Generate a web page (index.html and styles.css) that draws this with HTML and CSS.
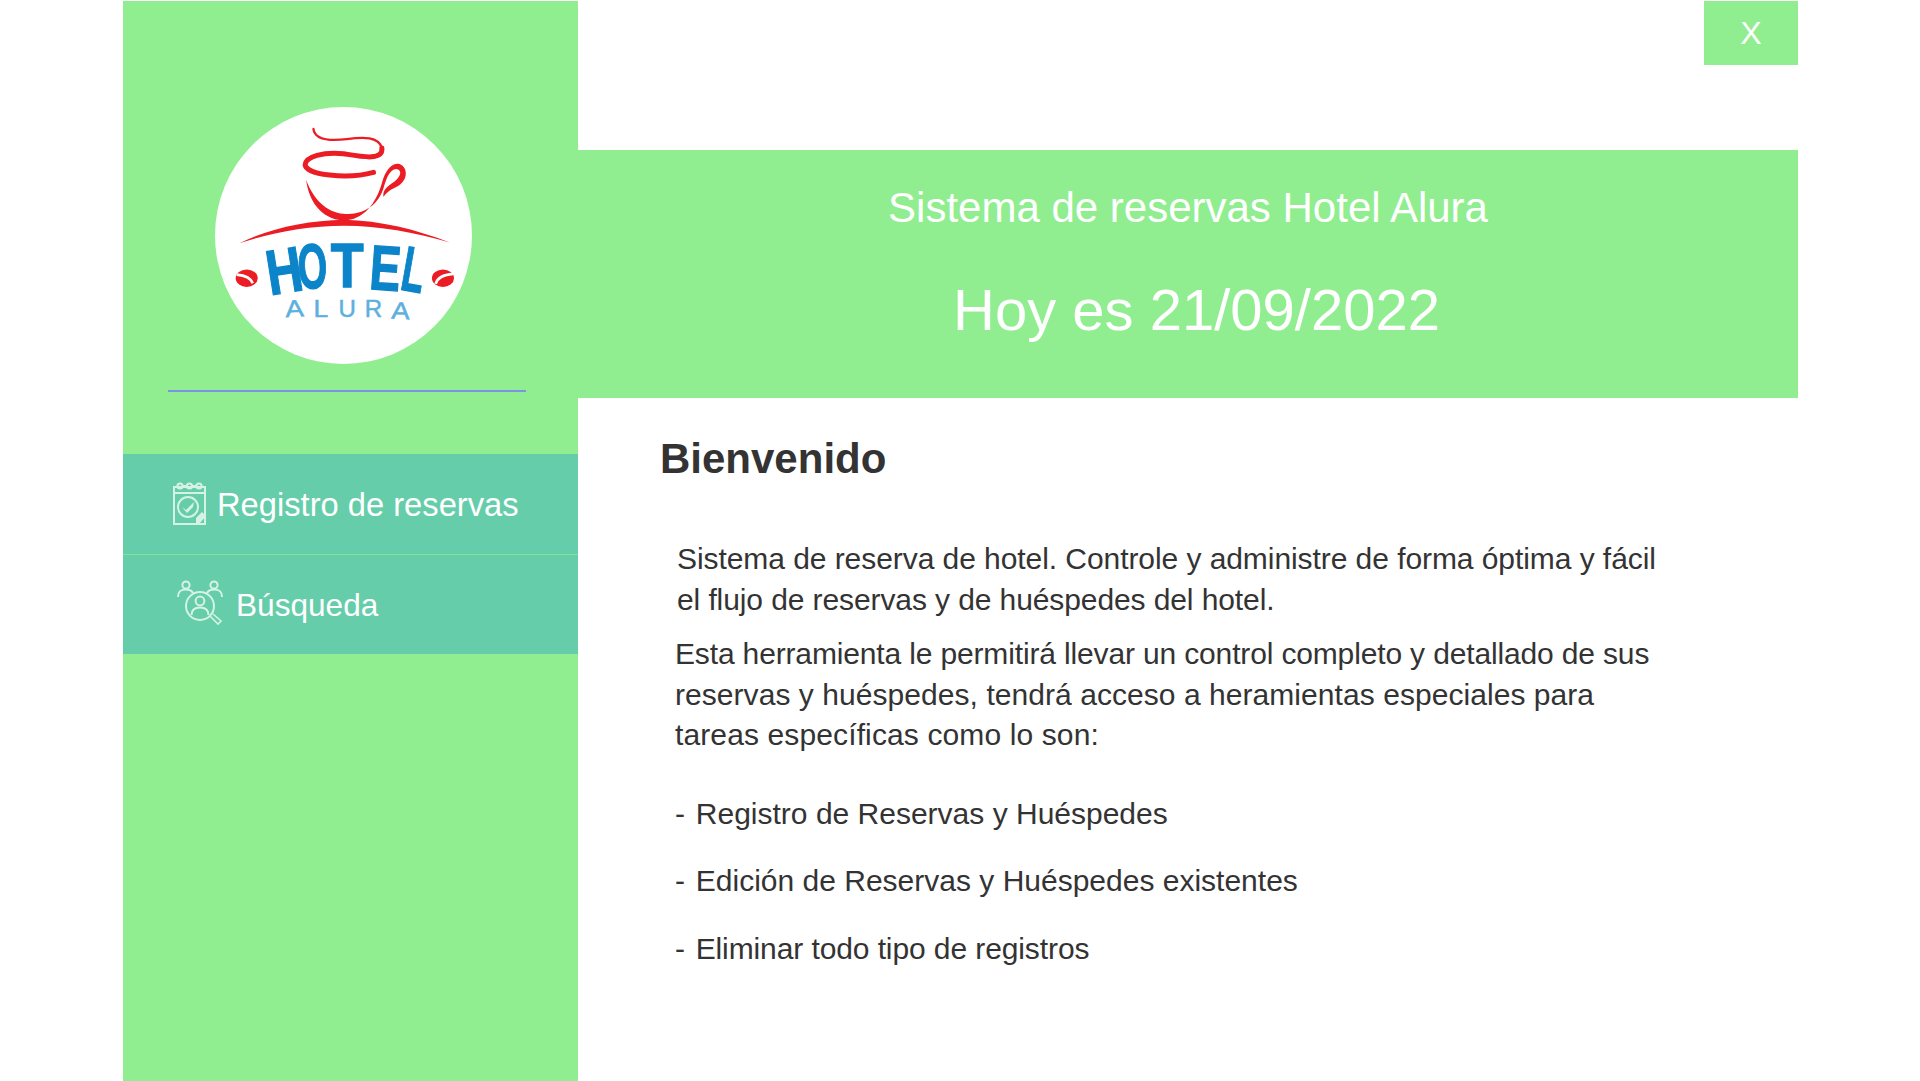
FILE: index.html
```html
<!DOCTYPE html>
<html lang="es">
<head>
<meta charset="utf-8">
<title>Sistema de reservas Hotel Alura</title>
<link rel="stylesheet" href="styles.css">
</head>
<body>
<div class="app">
  <aside class="sidebar">
    <div class="logo-wrap">
      <svg class="logo" viewBox="285 52 770 770" aria-label="Hotel Alura">
        <circle cx="670" cy="437" r="385" fill="#fff"/>
        <path class="steam" d="M580 118C584 150 630 154 680 148C730 142 775 140 785 175"/>
        <path class="rim" d="M785 175C790 215 720 200 670 192C610 186 557 200 555 225C557 255 680 270 760 248"/>
        <path class="red" d="M558 270C565 330 600 388 670 392C730 392 768 340 785 280C795 240 815 220 835 222C860 228 868 265 835 288C815 298 800 305 790 322C786 302 800 290 822 276C845 258 845 240 828 238C808 240 800 262 790 295C775 345 730 378 670 372C620 368 580 330 558 270Z"/>
        <path class="red" d="M358 460C450 416 560 392 672 390C780 392 890 420 988 458C880 428 780 408 672 408C560 408 450 430 358 460Z"/>
        <g class="hotel">
          <text transform="translate(450 616) rotate(-9) scale(.78 1)">H</text>
          <text transform="translate(536 597) rotate(-3) scale(.6 1)">O</text>
          <text transform="translate(632 590) scale(.85 1)">T</text>
          <text transform="translate(745 597) rotate(4) scale(.73 1)">E</text>
          <text transform="translate(836 598) rotate(10) scale(.58 1)">L</text>
        </g>
        <g class="alura">
          <text transform="translate(497 682) rotate(-3) scale(1.15 1)">A</text>
          <text transform="translate(580 680) scale(1.1 1)">L</text>
          <text transform="translate(655 680)">U</text>
          <text transform="translate(734 680)">R</text>
          <text transform="translate(812 686) rotate(3) scale(1.15 1)">A</text>
        </g>
        <ellipse class="red" cx="380" cy="565" rx="33" ry="26"/>
        <path class="slit" d="M350 554C372 556 392 562 398 580"/>
        <ellipse class="red" cx="968" cy="565" rx="33" ry="26"/>
        <path class="slit" d="M946 582C952 562 972 554 998 552"/>
      </svg>
    </div>
    <div class="divider"></div>
    <nav class="menu">
      <a class="item item-reg">
        <svg class="icon icon-cal" viewBox="0 0 33 43">
          <rect x="1" y="5" width="31" height="37"/>
          <path d="M1 11H32"/>
          <circle cx="7" cy="4" r="2.600"/><circle cx="16.500" cy="4" r="2.600"/><circle cx="26" cy="4" r="2.600"/>
          <path d="M9.500 4H14M19 4H23.500"/>
          <circle cx="15" cy="25" r="10"/>
          <path class="icon-fill" d="M9 25L13 28L21 20L20 25L14 31Z"/>
          <path class="icon-fill" d="M23 41L23 36L29 30L33 34L27 41Z"/>
        </svg>
        <span>Registro de reservas</span>
      </a>
      <a class="item item-search">
        <svg class="icon icon-people" viewBox="0 0 46 46">
          <circle cx="9" cy="5" r="3.600"/>
          <path d="M1 17C1 11 4 9.500 9 9.500C13 9.500 15 11 16 13"/>
          <circle cx="37" cy="5" r="3.600"/>
          <path d="M45 17C45 11 42 9.500 37 9.500C33 9.500 31 11 30 13"/>
          <circle cx="23" cy="26" r="14"/>
          <circle cx="23" cy="21" r="4.400"/>
          <path d="M14.500 35C14.500 29 18 27.500 23 27.500C28 27.500 31.500 29 31.500 35"/>
          <path d="M33 36L41 44L44 41L36 34" stroke-width="1.600"/>
        </svg>
        <span>Búsqueda</span>
      </a>
    </nav>
  </aside>
  <main class="main">
    <div class="topbar"><button class="close">X</button></div>
    <header class="banner">
      <h2 class="subtitle">Sistema de reservas Hotel Alura</h2>
      <h1 class="date">Hoy es 21/09/2022</h1>
    </header>
    <section class="content">
      <h3 class="welcome">Bienvenido</h3>
      <p class="para para-a"><span class="tight-a">Sistema de reserva de hotel. Controle y administre de forma óptima y fácil</span><br><span class="tight-b">el flujo de reservas y de huéspedes del hotel.</span></p>
      <p class="para para-b"><span class="tight-c">Esta herramienta le permitirá llevar un control completo y detallado de sus</span><br><span class="loose-a">reservas y huéspedes, tendrá acceso a heramientas especiales para</span><br><span class="loose-b">tareas específicas como lo son:</span></p>
      <ul class="list">
        <li><span class="dash">-</span> Registro de Reservas y Huéspedes</li>
        <li><span class="dash">-</span> Edición de Reservas y Huéspedes existentes</li>
        <li class="tight-b"><span class="dash">-</span> Eliminar todo tipo de registros</li>
      </ul>
    </section>
  </main>
</div>
</body>
</html>
```
FILE: styles.css
```css
* { box-sizing: border-box; }
html, body { margin: 0; padding: 0; height: 100%; background: #fff; overflow: hidden; }
body { font-family: "Liberation Sans", Arial, sans-serif; }
.app { display: flex; height: 1081px; padding: 1px 122px 0 123px; }

.sidebar { width: 455px; flex: none; background: #90ee90; display: flex; flex-direction: column; }
.logo-wrap { padding: 106px 0 0 92px; height: 389px; }
.logo { display: block; width: 257px; height: 257px; }
.divider { height: 2px; width: 358px; margin-left: 45px; background: #7b93e6; }
.menu { margin-top: 62px; display: flex; flex-direction: column; }
.item { height: 100px; background: #66cdaa; color: #fff; display: flex; align-items: center; padding-top: 1px; }
.item-reg { font-size: 32.700px; }
.item-search { border-top: 1px solid #84e294; font-size: 31.600px; }
.icon { flex: none; fill: none; stroke: #d6f2e6; stroke-width: 2; }
.icon-fill { fill: #d6f2e6; stroke: none; }
.icon-cal { width: 33px; height: 43px; margin: -2px 11px 0 50px; }
.icon-people { width: 46px; height: 46px; margin: -4px 13px 0 54px; }

.red { fill: #ec1c24; }
.steam { fill: none; stroke: #ec1c24; stroke-width: 7px; stroke-linecap: round; }
.rim { fill: none; stroke: #ec1c24; stroke-width: 15px; stroke-linecap: round; }
.slit { fill: none; stroke: #fff; stroke-width: 8px; }
.hotel text { font-family: "Liberation Sans", sans-serif; font-weight: 700; font-size: 190px; fill: #0b84c9; stroke: #0b84c9; stroke-width: 4px; }
.alura text { font-family: "Liberation Sans", sans-serif; font-size: 72px; fill: #5cb0de; stroke: #5cb0de; stroke-width: 1.500px; }

.main { flex: 1; display: flex; flex-direction: column; min-width: 0; }
.topbar { height: 149px; display: flex; justify-content: flex-end; align-items: flex-start; }
.close { width: 94px; height: 64px; padding: 0; border: 0; background: #90ee90; color: #fff; font: 32px "Liberation Sans", sans-serif; }
.banner { height: 248px; background: #90ee90; color: #fff; display: flex; flex-direction: column; align-items: center; }
.subtitle { margin: 33px 0 0; font-weight: 400; font-size: 42px; line-height: 50px; }
.date { margin: 43px 0 0 17px; font-weight: 400; font-size: 58px; line-height: 68px; }

.content { padding: 36px 0 0 82px; color: #333; }
.welcome { margin: 0; font-size: 42px; font-weight: 700; line-height: 50px; }
.para { margin: 0; font-size: 30px; line-height: 41px; white-space: nowrap; }
.para-a { margin: 54px 0 0 17px; }
.para-b { margin: 14px 0 0 15px; line-height: 40.500px; }
.tight-a { letter-spacing: -.066px; }
.tight-b { letter-spacing: -.1px; }
.tight-c { letter-spacing: -.15px; }
.loose-a { letter-spacing: .055px; }
.loose-b { letter-spacing: .12px; }
.list { list-style: none; margin: 37px 0 0 15px; padding: 0; font-size: 30px; line-height: 41px; }
.list li { margin-bottom: 26.500px; }
.dash { margin-right: 2.500px; }
```
